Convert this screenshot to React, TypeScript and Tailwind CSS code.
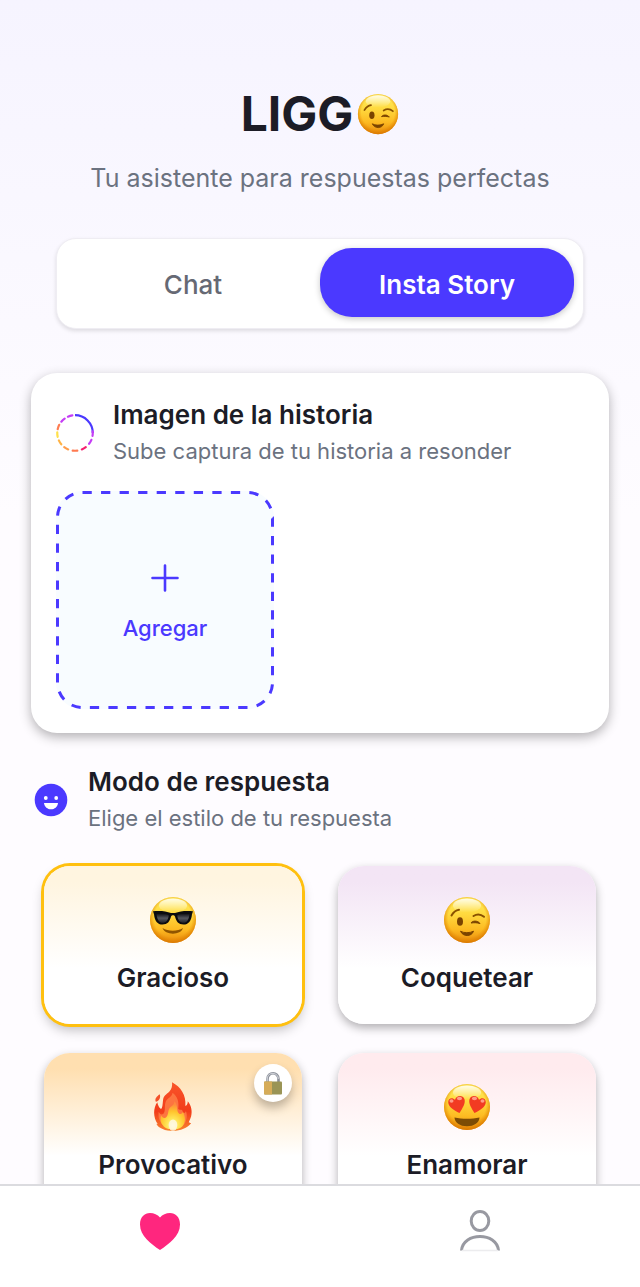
import { useState } from "react";
import type { ReactNode } from "react";

const FaceBase = () => (
    <>
        <defs>
            <linearGradient id="faceFill" x1="0" y1="0" x2="0" y2="1">
                <stop offset="0" stopColor="#ffee60" />
                <stop offset="0.35" stopColor="#ffdb40" />
                <stop offset="0.7" stopColor="#fdbb22" />
                <stop offset="1" stopColor="#e8880c" />
            </linearGradient>
            <radialGradient id="faceEdge" cx="0.5" cy="0.46" r="0.54">
                <stop offset="0.76" stopColor="#e58a00" stopOpacity="0" />
                <stop offset="1" stopColor="#d97800" stopOpacity="0.9" />
            </radialGradient>
            <linearGradient id="faceShine" x1="0" y1="0" x2="0" y2="1">
                <stop offset="0" stopColor="#fff" stopOpacity="0.85" />
                <stop offset="1" stopColor="#fff" stopOpacity="0" />
            </linearGradient>
        </defs>
        <circle cx="24" cy="24" r="23" fill="url(#faceFill)" />
        <circle cx="24" cy="24" r="23" fill="url(#faceEdge)" />
        <ellipse cx="24" cy="9.500" rx="14" ry="7" fill="url(#faceShine)" />
    </>
);

const WinkFace = ({ className }: { className: string }) => (
    <svg viewBox="0 0 48 48" className={className} aria-hidden="true">
        <FaceBase />
        <ellipse cx="17" cy="25.500" rx="3" ry="4.300" fill="#7a4300" />
        <path d="M8.500 19.500C10.500 16 13 14.200 16 13.800" fill="none" stroke="#8a5200" strokeWidth="2" strokeLinecap="round" />
        <path d="M30.500 20C34 17.800 38 18.300 41 20.800" fill="none" stroke="#8a5200" strokeWidth="2" strokeLinecap="round" />
        <path d="M28 27C29.500 24.600 34.500 24.200 37 27.500C34 26.600 31 26.600 28 27Z" fill="#7a4300" stroke="#7a4300" strokeLinejoin="round" />
        <path d="M17.500 35.200C20.500 37.200 27 37.200 30.500 35.200C28.500 41 20 41 17.500 35.200Z" fill="#7a4300" stroke="#7a4300" strokeLinejoin="round" />
    </svg>
);

const CoolFace = ({ className }: { className: string }) => (
    <svg viewBox="0 0 48 48" className={className} aria-hidden="true">
        <defs>
            <linearGradient id="lens" x1="0" y1="0" x2="0" y2="1">
                <stop offset="0" stopColor="#0c0d10" />
                <stop offset="0.5" stopColor="#54575e" />
                <stop offset="1" stopColor="#22242a" />
            </linearGradient>
        </defs>
        <FaceBase />
        <path d="M13.500 32C19 35.500 28.500 35.500 34 32C32 39.500 16 39.500 13.500 32Z" fill="#8f5500" />
        <path d="M4 15.200C11 14.600 17 15 22 17H26C31 15 37 14.600 44 15.200L43 18.200C42.300 25 39.500 28.500 34.500 28.500C29.500 28.500 27.200 25.500 26 20.500C25.300 18.700 22.700 18.700 22 20.500C20.800 25.500 18.500 28.500 13.500 28.500C8.500 28.500 5.700 25 5 18.200Z" fill="#0b0c0f" />
        <path d="M7.500 18C12 17 17 17.500 19.800 19.500C19 24.500 17 26.800 13.500 26.800C10 26.800 8.100 23.500 7.500 18Z" fill="url(#lens)" />
        <path d="M40.500 18C36 17 31 17.500 28.200 19.500C29 24.500 31 26.800 34.500 26.800C38 26.800 39.900 23.500 40.500 18Z" fill="url(#lens)" />
    </svg>
);

const LoveFace = ({ className }: { className: string }) => (
    <svg viewBox="0 0 48 48" className={className} aria-hidden="true">
        <FaceBase />
        <path d="M16.500 30C10.500 27 5.500 24 5.200 19.200C5 15.500 9.200 13.600 12 16.800C13 12 20 11.500 21.500 16.200C22.700 20.500 19.500 25 16.500 30Z" fill="#f23b22" />
        <path d="M31.500 30C37.500 27 42.500 24 42.800 19.200C43 15.500 38.800 13.600 36 16.800C35 12 28 11.500 26.500 16.200C25.300 20.500 28.500 25 31.500 30Z" fill="#f23b22" />
        <ellipse cx="8.500" cy="18" rx="2" ry="1.800" fill="#ff9a85" />
        <ellipse cx="16.500" cy="15.500" rx="2.600" ry="1.700" fill="#ff9a85" />
        <ellipse cx="31.500" cy="15.500" rx="2.600" ry="1.700" fill="#ff9a85" />
        <ellipse cx="39.500" cy="18" rx="2" ry="1.800" fill="#ff9a85" />
        <path d="M11.500 34.500C19 36.300 29 36.300 36.500 34.500C36.500 39.500 31 43.300 24 43.300C17 43.300 11.500 39.500 11.500 34.500Z" fill="#7d4c05" />
    </svg>
);

const Fire = ({ className }: { className: string }) => (
    <svg viewBox="0 0 42 52" className={className} aria-hidden="true">
        <defs>
            <linearGradient id="flame" x1="0" y1="0" x2="0" y2="1">
                <stop offset="0" stopColor="#f9552a" />
                <stop offset="0.6" stopColor="#f23c1a" />
                <stop offset="1" stopColor="#f8832e" />
            </linearGradient>
            <radialGradient id="flameCore" cx="0.5" cy="0.85" r="0.75">
                <stop offset="0" stopColor="#fffbe0" />
                <stop offset="0.3" stopColor="#ffe75a" />
                <stop offset="0.65" stopColor="#ffc42d" />
                <stop offset="1" stopColor="#ff8a3d" />
            </radialGradient>
        </defs>
        <path d="M20 0C29 5 35 13 34 25C36 24 36.500 22 36.500 20C40 24 41.500 30 40 36C39.500 38 38.500 40 37.500 42C38.500 42.500 39.500 43 40 43C36 48 29 51 21 51C13 51 6 48.500 3.500 43.500L5 44C0 37 0 27 4.500 21C5 24 6.500 27 8.500 28C10 27 10 24 10.500 19C11 14 14 13 17 10C19.500 7.500 20.500 4 20 0Z" fill="url(#flame)" />
        <path d="M7 12.500C8.500 16 6.500 19.500 3 20.500C1.500 17 4 15 7 12.500Z" fill="#f4512a" />
        <path d="M20.500 11C26 15 27.500 21 26.500 28C29 30 31 27 31.500 32C34 33 34.500 31 34.500 30C36.500 36 35 41 33 44C29 48.500 14 48.500 9.500 44C6 40 5.500 36 6 31C7.500 34 9 34.500 11 33C13.500 30 11.500 25 13.500 20C15 16.500 20 15.500 20.500 11Z" fill="#ff8148" opacity="0.8" />
        <path d="M22.500 20C27 25 24 30 27.500 33C29.500 34.500 31 32 31.500 31C34.500 37 34 42 31.500 45.500C28 51 14 51 10.500 45.500C7.500 42 7.500 38 8.500 35C10 38 12.500 38.500 14.500 36C17 32.500 15 29 18.500 26C21 24 22.500 23 22.500 20Z" fill="url(#flameCore)" />
        <ellipse cx="21" cy="45" rx="4.500" ry="6" fill="#fff8e0" opacity="0.85" />
    </svg>
);

const Lock = ({ className }: { className: string }) => (
    <svg viewBox="0 0 20 24" className={className} aria-hidden="true">
        <path d="M4.500 12V8C4.500 0.400 15.500 0.400 15.500 8V12" fill="none" stroke="#8b8f98" strokeWidth="2.600" />
        <path d="M4.300 12V8C4.300 0.600 15 0.600 15.300 8" fill="none" stroke="#c9ccd3" strokeWidth="1.200" />
        <rect x="1" y="10.500" width="18" height="13" rx="1" fill="#9a9455" />
        <path d="M2 10.500H9V23.500H2Q1 23.500 1 22.500V11.500Q1 10.500 2 10.500Z" fill="#d6ac58" />
    </svg>
);

// first quarter is solid, the rest is dashed from violet to yellow and back
const STORY_DASHES = [
    { angle: 92, color: "#c53df5" },
    { angle: 120, color: "#c53df5" },
    { angle: 150, color: "#f5216f" },
    { angle: 180, color: "#ff7a50" },
    { angle: 210, color: "#ff9d4c" },
    { angle: 238, color: "#ffb347" },
    { angle: 265, color: "#ffe04a" },
    { angle: 290, color: "#ff7d52" },
    { angle: 317, color: "#c53df5" },
    { angle: 344, color: "#c53df5" },
];

const StoryRing = () => (
    <svg viewBox="0 0 38 38" className="size-[38px]" aria-hidden="true">
        <path d="M19 1.200A17.800 17.800 0 0 1 36.800 19" fill="none" stroke="#4b39ff" strokeWidth="2.200" />
        {STORY_DASHES.map((d) => (
            <path
                key={d.angle}
                d="M16.700 1.400Q19 1.100 21.300 1.400"
                transform={`rotate(${d.angle} 19 19)`}
                fill="none"
                stroke={d.color}
                strokeWidth="2.200"
                strokeLinecap="round"
            />
        ))}
    </svg>
);

const SmileBadge = () => (
    <svg viewBox="0 0 34 34" className="size-[34px]" aria-hidden="true">
        <circle cx="17" cy="17" r="16.300" fill="#4b39ff" />
        <circle cx="11.800" cy="15" r="1.900" fill="#fff" />
        <circle cx="22.200" cy="15" r="1.900" fill="#fff" />
        <path d="M10 20H24C23.500 24 20.500 26.300 17 26.300C13.500 26.300 10.500 24 10 20Z" fill="#fff" />
    </svg>
);

type Mode = {
    name: string;
    icon: ReactNode;
    tint: string;
    locked?: boolean;
};

const MODES: Mode[] = [
    { name: "Gracioso", icon: <CoolFace className="size-12" />, tint: "from-[#fff5e0]" },
    { name: "Coquetear", icon: <WinkFace className="size-12" />, tint: "from-[#f3e5f5]" },
    { name: "Provocativo", icon: <Fire className="h-[50px] w-10" />, tint: "from-[#ffdfb0]", locked: true },
    { name: "Enamorar", icon: <LoveFace className="size-12" />, tint: "from-[#ffebee]" },
];

const Header = () => (
    <header className="flex flex-col items-center pt-[84px]">
        <h1 className="flex items-center gap-1 text-[48px] leading-[60px] font-bold">
            LIGG
            <WinkFace className="size-[42px]" />
        </h1>
        <p className="mt-[18px] text-[25px] leading-8 text-[#6b7280]">
            Tu asistente para respuestas perfectas
        </p>
    </header>
);

const SectionTitle = ({ title, text }: { title: string; text: string }) => (
    <div>
        <h2 className="text-[26px] leading-9 font-semibold">{title}</h2>
        <p className="text-[22px] leading-9 text-[#6b7280]">{text}</p>
    </div>
);

const ModeCard = ({ mode, selected, onSelect }: { mode: Mode; selected: boolean; onSelect: () => void }) => (
    <button
        type="button"
        aria-pressed={selected}
        onClick={onSelect}
        className={`relative flex h-[158px] flex-col items-center rounded-[26px] bg-linear-to-b from-10% to-white to-65% pt-7 ${mode.tint} ${
            selected ? "ring-3 ring-[#ffc00f] shadow-[0_6px_12px_rgba(0,0,0,0.25)]" : "shadow-[0_4px_10px_rgba(0,0,0,0.3)]"
        }`}
    >
        <span className="flex h-[52px] items-center">{mode.icon}</span>
        <span className="mt-3 text-[26px] leading-10 font-semibold">{mode.name}</span>
        {mode.locked && (
            <span className="absolute top-[11px] right-[10px] flex size-[38px] items-center justify-center rounded-full bg-white shadow-[0_6px_10px_rgba(0,0,0,0.25)]">
                <Lock className="h-6 w-5" />
            </span>
        )}
    </button>
);

export default function App() {
    const [tab, setTab] = useState("Insta Story");
    const [mode, setMode] = useState("Gracioso");

    return (
        <div className="flex h-screen flex-col bg-linear-to-b from-[#f6f4ff] to-[#fefcff] to-40% font-['Inter',sans-serif] text-[#1c1c26]">
            <main className="min-h-0 flex-1 overflow-y-auto [scrollbar-width:none]">
                <Header />

                <div className="mx-14 mt-11 flex h-[91px] items-start rounded-[20px] border border-[#efedf3] bg-white p-[9px] shadow-[0_2px_4px_rgba(0,0,0,0.12)]">
                    {["Chat", "Insta Story"].map((name) => (
                        <button
                            key={name}
                            type="button"
                            aria-pressed={tab === name}
                            onClick={() => setTab(name)}
                            className={`h-[69px] flex-1 rounded-[32px] pt-1 text-[26px] ${
                                tab === name
                                    ? "bg-[#4b39ff] font-semibold text-white shadow-[0_2px_6px_rgba(0,0,0,0.22)]"
                                    : "font-medium text-[#666974]"
                            }`}
                        >
                            {name}
                        </button>
                    ))}
                </div>

                <section className="mx-[31px] mt-11 rounded-[26px] bg-white px-[25px] pt-6 pb-6 shadow-[0_4px_12px_rgba(0,0,0,0.3)]">
                    <div className="flex items-center gap-[19px]">
                        <StoryRing />
                        <SectionTitle title="Imagen de la historia" text="Sube captura de tu historia a resonder" />
                    </div>
                    <button
                        type="button"
                        className="relative mt-[22px] flex size-[218px] flex-col items-center justify-center rounded-[26px] bg-[#f8fcff] pt-2 text-[#4b39ff]"
                    >
                        <svg viewBox="0 0 218 218" className="absolute inset-0 size-full" aria-hidden="true">
                            <rect x="1.500" y="1.500" width="215" height="215" rx="25" fill="none" stroke="currentColor" strokeWidth="3" pathLength="88" strokeDasharray="1 1" />
                        </svg>
                        <svg viewBox="0 0 28 28" className="size-7" aria-hidden="true">
                            <path d="M14 1.500V26.500M1.500 14H26.500" stroke="currentColor" strokeWidth="2.600" strokeLinecap="round" />
                        </svg>
                        <span className="mt-5 text-[22px] leading-8 font-medium">Agregar</span>
                    </button>
                </section>

                <section className="mt-[31px]">
                    <div className="flex items-center gap-5 px-[34px]">
                        <SmileBadge />
                        <SectionTitle title="Modo de respuesta" text="Elige el estilo de tu respuesta" />
                    </div>
                    <div className="grid grid-cols-2 gap-x-9 gap-y-[29px] px-11 pt-[30px] pb-8">
                        {MODES.map((m) => (
                            <ModeCard key={m.name} mode={m} selected={mode === m.name} onSelect={() => setMode(m.name)} />
                        ))}
                    </div>
                </section>
            </main>

            <nav className="grid h-[103px] shrink-0 grid-cols-2 border-t-2 border-[#dbdbdf] bg-white">
                <a href="#inicio" aria-label="Inicio" className="flex justify-center pt-6">
                    <svg viewBox="0 0 42 40" className="h-10 w-[42px]" aria-hidden="true">
                        <path d="M21 40C12 34 1 26 1 14.500C1 7 5.500 3 11 3C15 3 18.500 4.500 21 7.500C23.500 4.500 27 3 31 3C36.500 3 41 7 41 14.500C41 26 30 34 21 40Z" fill="#ff267e" />
                    </svg>
                </a>
                <a href="#perfil" aria-label="Perfil" className="flex justify-center pt-6">
                    <svg viewBox="0 0 42 42" className="size-[42px]" fill="none" stroke="#9899a1" strokeWidth="3" aria-hidden="true">
                        <ellipse cx="21" cy="11" rx="8.800" ry="9.500" />
                        <path d="M2.500 40.500C4 21.800 38 21.800 39.500 40.500" />
                        <path d="M3 40.500H39" stroke="#ececee" strokeWidth="1.500" />
                    </svg>
                </a>
            </nav>
        </div>
    );
}
